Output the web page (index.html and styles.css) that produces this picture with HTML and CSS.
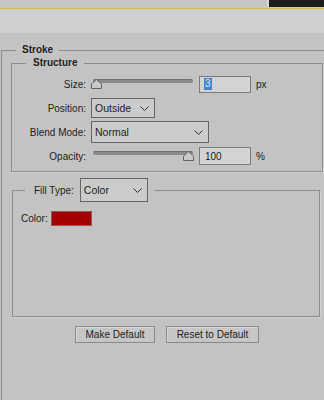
FILE: index.html
```html
<!DOCTYPE html>
<html lang="en">
<head>
    <meta charset="UTF-8">
    <meta name="viewport" content="width=device-width, initial-scale=1.0">
    <title>Layer Style - Stroke</title>
    <link rel="stylesheet" href="styles.css">
</head>
<body>
    <div class="topbar">
        <div class="topbar-dark"></div>
    </div>
    <div class="toolbar"></div>

    <div class="panel">
        <fieldset class="group group-stroke">
            <legend class="group-title">Stroke</legend>
            <div class="stroke-body">

                <fieldset class="group group-structure">
                    <legend class="group-title group-title-structure">Structure</legend>
                    <div class="structure-body">
                        <div class="row">
                            <span class="label">Size:</span>
                            <div class="slider">
                                <div class="slider-track"></div>
                                <svg class="slider-thumb" style="left: 0px" width="11" height="10" viewBox="0 0 11 10">
                                    <polygon points="5.5,0.5 10.5,5 10.5,9.5 0.5,9.5 0.5,5" />
                                </svg>
                            </div>
                            <div class="field"><span class="selected">3</span></div>
                            <span class="unit">px</span>
                        </div>
                        <div class="row">
                            <span class="label">Position:</span>
                            <div class="select select-position">
                                <span>Outside</span>
                                <svg width="9" height="5" viewBox="0 0 9 5"><polyline points="0.5,0.5 4.5,4.5 8.5,0.5" /></svg>
                            </div>
                        </div>
                        <div class="row">
                            <span class="label">Blend Mode:</span>
                            <div class="select select-blend">
                                <span>Normal</span>
                                <svg width="9" height="5" viewBox="0 0 9 5"><polyline points="0.5,0.5 4.5,4.5 8.5,0.5" /></svg>
                            </div>
                        </div>
                        <div class="row">
                            <span class="label">Opacity:</span>
                            <div class="slider">
                                <div class="slider-track"></div>
                                <svg class="slider-thumb" style="left: 92px" width="11" height="10" viewBox="0 0 11 10">
                                    <polygon points="5.5,0.5 10.5,5 10.5,9.5 0.5,9.5 0.5,5" />
                                </svg>
                            </div>
                            <div class="field field-opacity">100</div>
                            <span class="unit">%</span>
                        </div>
                    </div>
                </fieldset>

                <fieldset class="group group-fill">
                    <legend class="fill-title">
                        <span>Fill Type:</span>
                        <div class="select select-fill">
                            <span>Color</span>
                            <svg width="9" height="5" viewBox="0 0 9 5"><polyline points="0.5,0.5 4.5,4.5 8.5,0.5" /></svg>
                        </div>
                    </legend>
                    <div class="fill-body">
                        <div class="color-row">
                            <span>Color:</span>
                            <div class="swatch"></div>
                        </div>
                    </div>
                </fieldset>

                <div class="actions">
                    <button class="btn btn-make">Make Default</button>
                    <button class="btn btn-reset">Reset to Default</button>
                </div>

            </div>
        </fieldset>
    </div>
</body>
</html>
```

FILE: styles.css
```css
body {
    margin: 0;
    padding: 0;
    background-color: #c3c3c3;
    font-family: 'Liberation Sans', Arial, sans-serif;
    font-size: 10px;
    color: #1e1e1e;
    overflow: hidden;
}

.topbar {
    height: 8px;
    background-color: #c6c6c6;
    border-bottom: 1px solid #d3ba52;
    display: flex;
    justify-content: flex-end;
}

.topbar-dark {
    width: 55px;
    height: 7px;
    background-color: #1d1d1d;
    border-left: 2px solid #d6d6d6;
}

.toolbar {
    height: 24px;
    background-color: #cecece;
}

.panel {
    height: 367px;
    padding-top: 11px;
    box-sizing: border-box;
    overflow: hidden;
}

.group {
    margin: 0;
    padding: 0;
    min-width: 0;
    border: 1px solid #8e8e8e;
    box-shadow: 1px 1px 0 #d2d2d2;
}

.group-title {
    font-weight: bold;
    line-height: 12px;
    padding: 0 6px;
    margin-left: 14px;
}

.group-stroke {
    margin: 0 -12px 0 1px;
    min-height: 420px;
}

.stroke-body {
    padding: 1px 12px 0 9px;
}

.group-title-structure {
    padding: 0 7px;
}

.structure-body {
    padding: 3px 0;
    display: grid;
    grid-auto-rows: 24px;
}

.row {
    display: flex;
    align-items: center;
}

.label {
    width: 74px;
    text-align: right;
    margin-right: 5px;
}

.slider {
    position: relative;
    width: 102px;
    height: 10px;
}

.slider-track {
    margin-left: 2px;
    width: 100px;
    height: 4px;
    border-radius: 2px;
    background-color: #8b8b8b;
    border-top: 1px solid #6f6f6f;
    box-sizing: border-box;
}

.slider-thumb {
    position: absolute;
    top: 0;
}

.slider-thumb polygon {
    fill: #c9c9c9;
    stroke: #656565;
    stroke-width: 1;
}

.field {
    width: 52px;
    height: 17px;
    margin-left: 6px;
    box-sizing: border-box;
    border: 1px solid #7b7b7b;
    background-color: #d3d3d3;
    padding-left: 4px;
    display: flex;
    align-items: center;
}

.field-opacity {
    height: 18px;
    padding-left: 5px;
}

.selected {
    background-color: #4a84cf;
    color: #dfe8f4;
    padding: 0 1px;
    line-height: 12px;
}

.unit {
    margin-left: 5px;
}

.select {
    height: 20px;
    box-sizing: border-box;
    border: 1px solid #666;
    background-color: #cbcbcb;
    padding: 0 5px 0 3px;
    display: flex;
    align-items: center;
    justify-content: space-between;
    font-size: 10.5px;
}

.select polyline {
    fill: none;
    stroke: #333;
    stroke-width: 1;
}

.select-position {
    width: 64px;
}

.select-blend {
    width: 118px;
    height: 22px;
}

.group-fill {
    margin: 6px 3px 0 1px;
}

.fill-title {
    display: flex;
    align-items: center;
    gap: 6px;
    height: 24px;
    margin: 0 0 -8px 12px;
    padding: 0 6px 0 9px;
}

.select-fill {
    width: 68px;
    height: 24px;
}

.fill-body {
    height: 122px;
    padding: 17px 0 0 8px;
    box-sizing: border-box;
}

.color-row {
    display: flex;
    align-items: center;
    gap: 3px;
}

.swatch {
    width: 41px;
    height: 15px;
    box-sizing: border-box;
    background-color: #a30000;
    border: 1px solid #8c5a5a;
}

.actions {
    margin-top: 9px;
    display: flex;
    justify-content: center;
    gap: 11px;
}

.btn {
    height: 17px;
    padding: 0;
    font-family: 'Liberation Sans', Arial, sans-serif;
    font-size: 10px;
    color: #222;
    background-color: #c6c6c6;
    border: 1px solid #8a8a8a;
    box-shadow: inset 1px 1px 0 #d6d6d6;
}

.btn-make {
    width: 80px;
}

.btn-reset {
    width: 93px;
}
```
